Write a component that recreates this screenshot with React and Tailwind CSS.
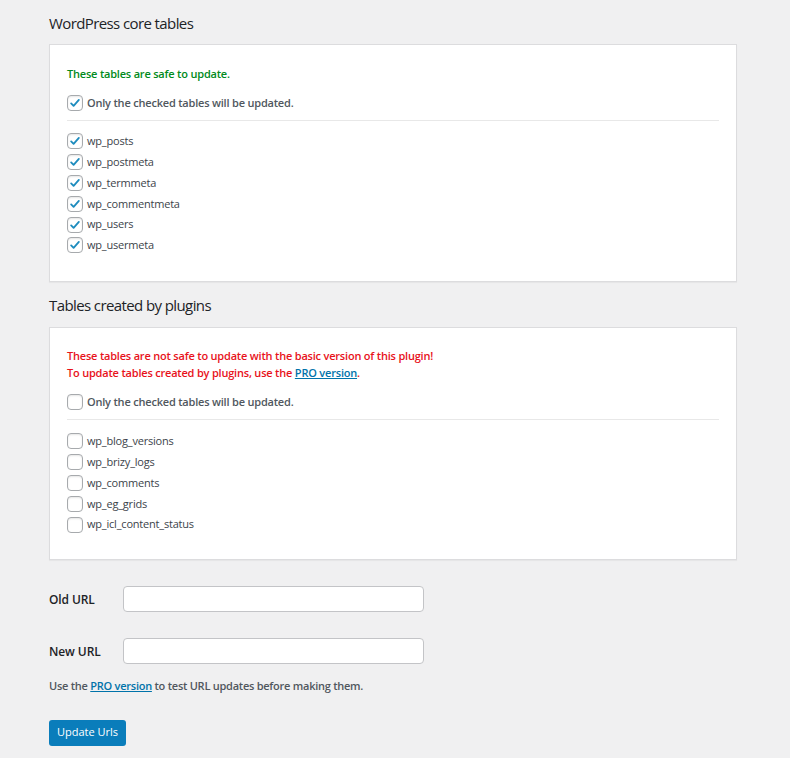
import React from "react";

const coreTables = [
  "wp_posts",
  "wp_postmeta",
  "wp_termmeta",
  "wp_commentmeta",
  "wp_users",
  "wp_usermeta",
];

const pluginTables = [
  "wp_blog_versions",
  "wp_brizy_logs",
  "wp_comments",
  "wp_eg_grids",
  "wp_icl_content_status",
];

function Box({ checked }) {
  return (
    <span className="flex h-4 w-4 shrink-0 items-center justify-center rounded-[4px] border border-[#a7aaad] bg-white shadow-[inset_0_1px_2px_rgba(0,0,0,0.1)]">
      {checked && (
        <svg viewBox="0 0 20 20" className="h-4 w-4">
          <path
            d="M4.5 10.5l3.5 3.5 7.5-8.5"
            fill="none"
            stroke="#1e8cbe"
            strokeWidth="2.6"
            strokeLinecap="round"
            strokeLinejoin="round"
          />
        </svg>
      )}
    </span>
  );
}

function TableList({ items, checked, className }) {
  return (
    <div className={`flex flex-col ${className}`}>
      {items.map((name) => (
        <label key={name} className="flex h-[20.8px] items-center gap-[4px]">
          <Box checked={checked} />
          <span className="text-[11px] tracking-[-0.2px] text-[#3c434a]">{name}</span>
        </label>
      ))}
    </div>
  );
}

function Card({ children, className }) {
  return (
    <div
      className={`w-[688px] border border-[#dcdcde] bg-white px-[17px] shadow-[0_1px_1px_rgba(0,0,0,0.04)] ${className}`}
    >
      {children}
    </div>
  );
}

export default function App() {
  return (
    <div
      className="min-h-[758px] bg-[#f0f0f1] pl-[49px] pt-[12px] text-[#3c434a]"
      style={{ fontFamily: '"Open Sans", "Noto Sans", sans-serif' }}
    >
      <h2 className="text-[15px] leading-[22px] tracking-[-0.6px] text-[#1d2327]">
        WordPress core tables
      </h2>

      <Card className="mt-[10px] h-[238px] pt-[19px]">
        <p className="text-[11px] font-semibold leading-[20px] tracking-[-0.2px] text-[#008a20]">
          These tables are safe to update.
        </p>
        <label className="mt-[10px] flex h-[18px] items-center gap-[4px]">
          <Box checked />
          <span className="text-[11px] font-semibold tracking-[-0.2px] text-[#50575e]">
            Only the checked tables will be updated.
          </span>
        </label>
        <div className="mt-[8px] h-px w-full bg-[#e8e8e8]" />
        <TableList items={coreTables} checked className="pt-[10px]" />
      </Card>

      <h2 className="mt-[12px] text-[15px] leading-[22px] tracking-[-0.6px] text-[#1d2327]">
        Tables created by plugins
      </h2>

      <Card className="mt-[11px] h-[233px] pt-[19px]">
        <p className="text-[11px] font-semibold leading-[17px] tracking-[-0.2px] text-[#e8121b]">
          These tables are not safe to update with the basic version of this plugin!
          <br />
          To update tables created by plugins, use the{" "}
          <a href="#" className="text-[#0073aa] underline">
            PRO version
          </a>
          .
        </p>
        <label className="mt-[12px] flex h-[18px] items-center gap-[4px]">
          <Box />
          <span className="text-[11px] font-semibold tracking-[-0.2px] text-[#50575e]">
            Only the checked tables will be updated.
          </span>
        </label>
        <div className="mt-[8px] h-px w-full bg-[#e8e8e8]" />
        <TableList items={pluginTables} className="pt-[11px]" />
      </Card>

      <div className="mt-[26px] flex items-center">
        <span className="w-[74px] pt-[2px] text-[12px] font-semibold tracking-[-0.1px] text-[#1d2327]">
          Old URL
        </span>
        <input className="h-[26px] w-[301px] rounded-[4px] border border-[#c3c4c7] bg-white" />
      </div>
      <div className="mt-[26px] flex items-center">
        <span className="w-[74px] pt-[2px] text-[12px] font-semibold tracking-[-0.1px] text-[#1d2327]">
          New URL
        </span>
        <input className="h-[26px] w-[301px] rounded-[4px] border border-[#c3c4c7] bg-white" />
      </div>

      <p className="mt-[14px] text-[11px] font-semibold tracking-[-0.25px] text-[#50575e]">
        Use the{" "}
        <a href="#" className="text-[#0073aa] underline">
          PRO version
        </a>{" "}
        to test URL updates before making them.
      </p>

      <button className="mt-[25px] h-[26px] w-[77px] rounded-[3px] bg-[#0a7dbb] text-[11px] text-white">
        Update Urls
      </button>
    </div>
  );
}
